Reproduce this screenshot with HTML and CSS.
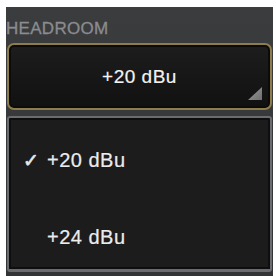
FILE: index.html
```html
<!DOCTYPE html>
<html>
<head>
<meta charset="utf-8">
<link rel="stylesheet" href="styles.css">
</head>
<body>
<div class="panel">
  <div class="label">HEADROOM</div>
  <div class="select">
    <span class="value">+20 dBu</span>
    <span class="corner"></span>
  </div>
  <div class="menu">
    <div class="item checked"><span class="check">✓</span><span>+20 dBu</span></div>
    <div class="item"><span class="check"></span><span>+24 dBu</span></div>
  </div>
</div>
</body>
</html>
```
FILE: styles.css
```css
html, body {
  margin: 0;
  padding: 0;
  background: #ffffff;
}
body {
  width: 276px;
  height: 276px;
  overflow: hidden;
  font-family: "Liberation Sans", Arial, sans-serif;
}
.panel {
  margin: 7px 0 0 6px;
  width: 267px;
  height: 269px;
  background: linear-gradient(#3b3c3e, #333436);
  box-sizing: border-box;
  padding: 0 1px 0 1px;
  display: flex;
  flex-direction: column;
}
.label {
  color: #8a8c8f;
  font-size: 17px;
  line-height: 20px;
  height: 20px;
  margin: 12px 0 4px -1px;
  letter-spacing: 0.3px;
  -webkit-text-stroke: 0.3px #8a8c8f;
}
.select {
  position: relative;
  height: 67px;
  box-sizing: border-box;
  border: 2px solid #8d7d4d;
  border-radius: 7px;
  background: linear-gradient(#1d1d1e, #111112);
  box-shadow: inset 0 0 0 2px #0b0b0b;
  display: flex;
  align-items: center;
  justify-content: center;
}
.value {
  color: #f2f2f2;
  font-size: 19px;
  letter-spacing: 0.5px;
  margin-top: 1px;
  -webkit-text-stroke: 0.2px #f2f2f2;
}
.corner {
  position: absolute;
  right: 8px;
  bottom: 8px;
  width: 14px;
  height: 13px;
  background: linear-gradient(135deg, #9a9a9a, #6e6e6e);
  clip-path: polygon(100% 0, 100% 100%, 0 100%);
}
.menu {
  margin-top: 6px;
  height: 156px;
  box-sizing: border-box;
  border: 2px solid #6a6c6f;
  border-bottom-width: 3px;
  border-radius: 3px;
  background: #1c1c1d;
  box-shadow: inset 0 0 0 2px #0e0e0f;
  display: flex;
  flex-direction: column;
  padding-top: 14px;
}
.item {
  display: flex;
  align-items: center;
  height: 56px;
  color: #ececec;
  font-size: 20px;
  letter-spacing: 0.5px;
  -webkit-text-stroke: 0.2px #ececec;
}
.item + .item {
  margin-top: 21px;
}
.check {
  width: 24px;
  padding-left: 14px;
  font-size: 19px;
  color: #e8e8e8;
  -webkit-text-stroke: 0.6px #e8e8e8;
}
```
